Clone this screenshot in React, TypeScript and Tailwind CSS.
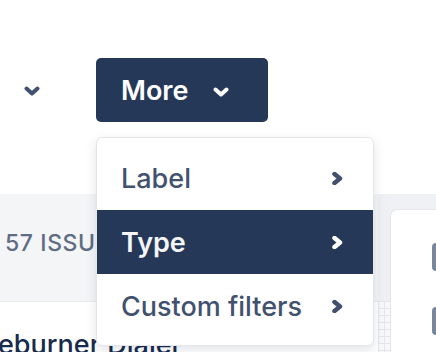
import React from "react";

function Chevron({ className, dir = "down", sw = 4 }: { className?: string; dir?: "down" | "right"; sw?: number }) {
  if (dir === "down") {
    return (
      <svg className={className} viewBox="0 0 16 10" fill="none" stroke="currentColor" strokeWidth={sw} strokeLinecap="round" strokeLinejoin="round">
        <path d="M2.5 2.5 L8 7.5 L13.5 2.5" />
      </svg>
    );
  }
  return (
    <svg className={className} viewBox="0 0 11 13" fill="none" stroke="currentColor" strokeWidth={sw} strokeLinecap="round" strokeLinejoin="round">
      <path d="M2.5 2 L8 6.5 L2.5 11" />
    </svg>
  );
}

export default function App() {
  const items = ["Label", "Type", "Custom filters"];
  return (
    <div className="relative w-[436px] h-[352px] overflow-hidden bg-white" style={{ fontFamily: "Inter, 'Noto Sans', sans-serif" }}>
      {/* top bar */}
      <div className="h-[194px] flex items-start pt-[58px] pl-[24px]">
        <div className="h-[64px] flex items-center">
          <Chevron className="w-[16px] h-[10px] text-[#42526e] mt-[2px]" />
        </div>
        <button className="ml-[56px] w-[172px] h-[64px] rounded-[5px] bg-[#253858] flex items-center pl-[25px] text-white text-[27px] font-semibold leading-none">
          More
          <Chevron className="ml-[25px] w-[16px] h-[10px] text-white mt-[3px]" />
        </button>
      </div>

      {/* content */}
      <div className="flex h-[158px]">
        <div className="w-[378px] flex flex-col">
          <div className="h-[107px] shrink-0 bg-[#f4f5f7] pl-[5px] pt-[38px] text-[23px] font-medium text-[#5e6c84] tracking-[0.6px] leading-none whitespace-nowrap">
            57 ISSUES
          </div>
          <div className="flex-1 min-h-0 overflow-hidden bg-white border-t border-[#ebecf0] pt-[29px] -ml-[2px] text-[27px] font-medium text-[#172b4d] leading-none whitespace-nowrap">
            eburner Dialer
          </div>
        </div>
        <div className="w-[12px] flex flex-col">
          <div className="h-[107px] shrink-0 bg-[#eef0f3]" />
          <div className="flex-1 bg-[#f7f8f9] bg-[linear-gradient(to_right,#e4e6ea_1px,transparent_1px),linear-gradient(to_bottom,#e4e6ea_1px,transparent_1px)] bg-[size:6px_7px]" />
        </div>
        <div className="flex-1 bg-[#f0f1f4] pt-[15px] flex flex-col">
          <div className="flex-1 bg-white rounded-tl-[7px] border-l border-t border-[#e4e6ea] flex flex-col items-end pt-[33px] gap-[36px]">
            <div className="w-[4px] h-[28px] shrink-0 rounded-l-[5px] bg-[#7a869a]" />
            <div className="w-[4px] h-[28px] shrink-0 rounded-l-[5px] bg-[#7a869a]" />
          </div>
        </div>
      </div>

      {/* dropdown menu */}
      <div className="absolute left-[96px] top-[137px] w-[278px] bg-white border border-[#e4e6ea] rounded-[6px] pt-[8px] pb-[7px] shadow-[0_4px_12px_rgba(9,30,66,0.12)]">
        {items.map((it) => {
          const active = it === "Type";
          return (
            <div
              key={it}
              className={`h-[64px] flex items-center justify-between pl-[24px] pr-[30px] text-[27px] leading-none ${
                active ? "bg-[#253858] text-[#f4f5f7] font-semibold" : "text-[#42526e] font-medium"
              }`}
            >
              <span>{it}</span>
              <Chevron dir="right" sw={4.5} className={`w-[11px] h-[13px] ${active ? "text-white" : "text-[#42526e]"}`} />
            </div>
          );
        })}
      </div>
    </div>
  );
}
